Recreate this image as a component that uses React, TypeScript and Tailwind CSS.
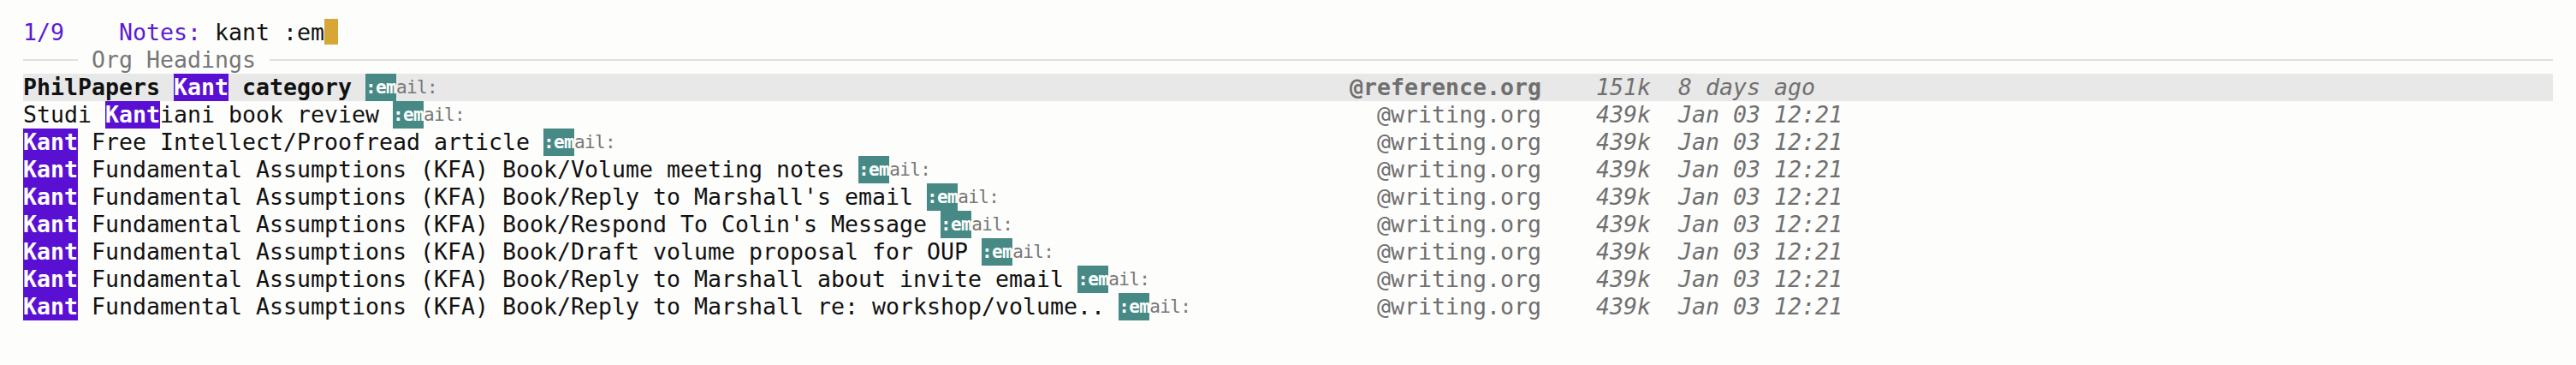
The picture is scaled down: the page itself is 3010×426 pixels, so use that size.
type Part = { t: string; hl?: boolean };

type Row = {
  parts: Part[];
  file: string;
  size: string;
  date: string;
  current?: boolean;
};

const KFA = ' Fundamental Assumptions (KFA) Book/';

const rows: Row[] = [
  { parts: [{ t: 'PhilPapers ' }, { t: 'Kant', hl: true }, { t: ' category ' }], file: '@reference.org', size: '151k', date: '8 days ago', current: true },
  { parts: [{ t: 'Studi ' }, { t: 'Kant', hl: true }, { t: 'iani book review ' }], file: '@writing.org', size: '439k', date: 'Jan 03 12:21' },
  { parts: [{ t: 'Kant', hl: true }, { t: ' Free Intellect/Proofread article ' }], file: '@writing.org', size: '439k', date: 'Jan 03 12:21' },
  { parts: [{ t: 'Kant', hl: true }, { t: KFA + 'Volume meeting notes ' }], file: '@writing.org', size: '439k', date: 'Jan 03 12:21' },
  { parts: [{ t: 'Kant', hl: true }, { t: KFA + "Reply to Marshall's email " }], file: '@writing.org', size: '439k', date: 'Jan 03 12:21' },
  { parts: [{ t: 'Kant', hl: true }, { t: KFA + "Respond To Colin's Message " }], file: '@writing.org', size: '439k', date: 'Jan 03 12:21' },
  { parts: [{ t: 'Kant', hl: true }, { t: KFA + 'Draft volume proposal for OUP ' }], file: '@writing.org', size: '439k', date: 'Jan 03 12:21' },
  { parts: [{ t: 'Kant', hl: true }, { t: KFA + 'Reply to Marshall about invite email ' }], file: '@writing.org', size: '439k', date: 'Jan 03 12:21' },
  { parts: [{ t: 'Kant', hl: true }, { t: KFA + 'Reply to Marshall re: workshop/volume.. ' }], file: '@writing.org', size: '439k', date: 'Jan 03 12:21' },
];

function Tag() {
  // the ":email:" tag, with the typed ":em" matched
  return (
    <span className="flex h-full items-center text-[21px] tracking-[-0.64px]">
      <span className="flex h-full items-center bg-[#478a85] font-bold text-white">:em</span>
      <span className="font-normal text-[#777777]">ail:</span>
    </span>
  );
}

function Candidate({ row }: { row: Row }) {
  return (
    <div className={`flex h-[32px] items-stretch ${row.current ? 'bg-[#e8e8e8] font-bold' : ''}`}>
      <div className="flex w-[1774px] shrink-0 items-stretch">
        {row.parts.map((p, i) =>
          p.hl ? (
            <span key={i} className="flex items-center bg-[#5a10d2] font-bold text-white">
              {p.t}
            </span>
          ) : (
            <span key={i} className="flex items-center whitespace-pre text-[#111111]">
              {p.t}
            </span>
          )
        )}
        <Tag />
        <span className="flex flex-1 items-center justify-end text-[#6f6f6f]">{row.file}</span>
      </div>
      <span className="ml-[64px] flex w-[64px] items-center font-normal italic text-[#707070]">{row.size}</span>
      <span className="ml-[32px] flex items-center font-normal italic text-[#707070]">{row.date}</span>
    </div>
  );
}

export default function App() {
  return (
    <div className="h-[426px] w-[3010px] bg-[#fdfdfc] px-[27px] pt-[22px] font-['DejaVu_Sans_Mono',monospace] text-[26.58px] leading-[32px]">
      {/* minibuffer prompt */}
      <div className="flex h-[32px] items-start whitespace-pre">
        <span className="text-[#5b1bd3]">1/9    Notes:</span>
        <span className="text-[#111111]"> kant :em</span>
        <span className="h-[30px] w-[16px] bg-[#d7a637]" />
      </div>

      {/* group header */}
      <div className="flex h-[32px] items-center">
        <div className="h-[2px] w-[64px] bg-[#e0e0e0]" />
        <span className="px-[16px] text-[#777777]">Org Headings</span>
        <div className="h-[2px] flex-1 bg-[#e0e0e0]" />
      </div>

      {rows.map((row, i) => (
        <Candidate key={i} row={row} />
      ))}
    </div>
  );
}
